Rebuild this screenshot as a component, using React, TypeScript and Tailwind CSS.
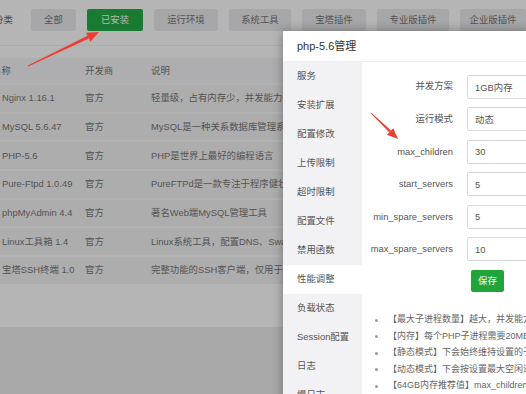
import React from "react";

const categories = [
  { label: "全部", w: "w-[45px]" },
  { label: "已安装", w: "w-[56px]", active: true },
  { label: "运行环境", w: "w-[64px]" },
  { label: "系统工具", w: "w-[62px]" },
  { label: "宝塔插件", w: "w-[64px]" },
  { label: "专业版插件", w: "w-[72px]" },
  { label: "企业版插件", w: "w-[66px]" },
];

const software = [
  { name: "Nginx 1.16.1", dev: "官方", desc: "轻量级，占有内存少，并发能力强" },
  { name: "MySQL 5.6.47", dev: "官方", desc: "MySQL是一种关系数据库管理系统" },
  { name: "PHP-5.6", dev: "官方", desc: "PHP是世界上最好的编程语言" },
  { name: "Pure-Ftpd 1.0.49", dev: "官方", desc: "PureFTPd是一款专注于程序健壮和软件安全" },
  { name: "phpMyAdmin 4.4", dev: "官方", desc: "著名Web端MySQL管理工具" },
  { name: "Linux工具箱 1.4", dev: "官方", desc: "Linux系统工具，配置DNS、Swap" },
  { name: "宝塔SSH终端 1.0", dev: "官方", desc: "完整功能的SSH客户端，仅用于连接本服务器" },
];

const menu = [
  "服务",
  "安装扩展",
  "配置修改",
  "上传限制",
  "超时限制",
  "配置文件",
  "禁用函数",
  "性能调整",
  "负载状态",
  "Session配置",
  "日志",
  "慢日志",
];

const fields = [
  { label: "并发方案", value: "1GB内存" },
  { label: "运行模式", value: "动态" },
  { label: "max_children", value: "30" },
  { label: "start_servers", value: "5" },
  { label: "min_spare_servers", value: "5" },
  { label: "max_spare_servers", value: "10" },
];

const tips = [
  "【最大子进程数量】越大，并发能力越强，但max_children最大不要超过5000",
  "【内存】每个PHP子进程需要20MB左右内存，过大的max_children会导致服务器不稳定",
  "【静态模式】下会始终维持设置的子进程数量，对内存开销较大，但并发能力较好",
  "【动态模式】下会按设置最大空闲进程数来收回进程，内存开销小，建议小内存机器使用",
  "【64GB内存推荐值】max_children=300，start_servers=50",
];

export default function App() {
  return (
    <div className="relative w-[526px] h-[394px] overflow-hidden bg-[#eeeef0] font-['Liberation_Sans','Noto_Sans_CJK_SC',sans-serif]">
      {/* Software store page (behind the dialog) */}
      <div className="-ml-[12px] w-[560px] bg-white pb-[43px]">
        <div className="flex items-center pt-[9px] pb-[14px] border-b border-[#f2f2f2]">
          <span className="w-[25px] text-right text-[9.4px] text-[#666] mr-[18px] whitespace-nowrap">分类</span>
          <div className="flex gap-[11px]">
            {categories.map((c) => (
              <div
                key={c.label}
                className={`${c.w} h-[22px] shrink-0 flex items-center justify-center rounded-[2px] text-[9.4px] ${
                  c.active ? "bg-[#24ad45] text-white" : "bg-[#ececee] text-[#777]"
                }`}
              >
                {c.label}
              </div>
            ))}
          </div>
        </div>

        <div className="mt-[11px]">
          <div className="flex items-center h-[26px] border-t-2 border-[#fafafa] bg-[#f6f6f8] text-[9.4px] text-[#777]">
            <span className="w-[97px] pl-[4px]">名称</span>
            <span className="w-[66px]">开发商</span>
            <span>说明</span>
          </div>
          {software.map((s) => (
            <div
              key={s.name}
              className="flex items-center h-[28.67px] border-t-2 border-[#fcfcfc] bg-[#f4f4f6] text-[9.4px] text-[#777] whitespace-nowrap"
            >
              <span className="w-[97px] pl-[14px]">{s.name}</span>
              <span className="w-[66px]">{s.dev}</span>
              <span>{s.desc}</span>
            </div>
          ))}
        </div>
      </div>

      {/* Modal backdrop */}
      <div className="absolute inset-0 bg-[rgba(0,0,0,0.29)]" />

      {/* php-5.6 manager dialog */}
      <div className="absolute left-[283px] top-[31px] w-[300px] h-[400px] bg-white shadow-[0_0_10px_rgba(0,0,0,0.35)]">
        <div className="h-[31px] flex items-center pl-[14px] border-b border-[#f0f0f0] text-[11px] text-[#333]">
          php-5.6管理
        </div>
        <div className="flex h-[369px]">
          <div className="w-[79px] shrink-0 bg-[#f2f1f4]">
            {menu.map((m) => (
              <div
                key={m}
                className={`h-[29px] flex items-center pl-[14px] whitespace-nowrap text-[9.4px] text-[#555] ${
                  m === "性能调整" ? "bg-white" : ""
                }`}
              >
                {m}
              </div>
            ))}
          </div>

          <div className="flex-1 min-w-0 pt-[12.5px]">
            <div className="flex flex-col gap-[8.6px]">
              {fields.map((f) => (
                <div key={f.label} className="flex items-center h-[24px]">
                  <span className="w-[91px] shrink-0 text-right whitespace-nowrap text-[9.4px] text-[#555]">
                    {f.label}
                  </span>
                  <input
                    readOnly
                    value={f.value}
                    className="ml-[14px] w-[120px] shrink-0 h-[24px] pl-[7px] border border-[#d9d9d9] rounded-[2px] text-[9.4px] text-[#555] outline-none"
                  />
                </div>
              ))}
            </div>

            <button className="ml-[109px] mt-[8.5px] w-[33px] h-[22px] rounded-[2px] bg-[#20a53a] text-white text-[9.4px]">
              保存
            </button>

            <ul className="mt-[20px]">
              {tips.map((t) => (
                <li key={t} className="flex items-center h-[16.5px] whitespace-nowrap text-[9px] text-[#666]">
                  <span className="ml-[13px] mr-[10px] w-[3px] h-[3px] rounded-full bg-[#999] shrink-0" />
                  {t}
                </li>
              ))}
            </ul>
          </div>
        </div>
      </div>

      {/* Red annotation arrows */}
      <svg className="absolute inset-0 pointer-events-none" width="526" height="394" viewBox="0 0 526 394">
        <polygon points="28.2,66.45 27.8,65.55 87.55,35.85 88.85,38.55" fill="#ee3d32" />
        <polygon points="99,32 90.4,41.7 86,32.7" fill="#ee3d32" />
        <polygon points="370.65,113.36 371.35,112.64 391,130.46 389.2,132.34" fill="#ee3d32" />
        <polygon points="398,139 386.98,134.64 393.22,128.16" fill="#ee3d32" />
      </svg>
    </div>
  );
}
